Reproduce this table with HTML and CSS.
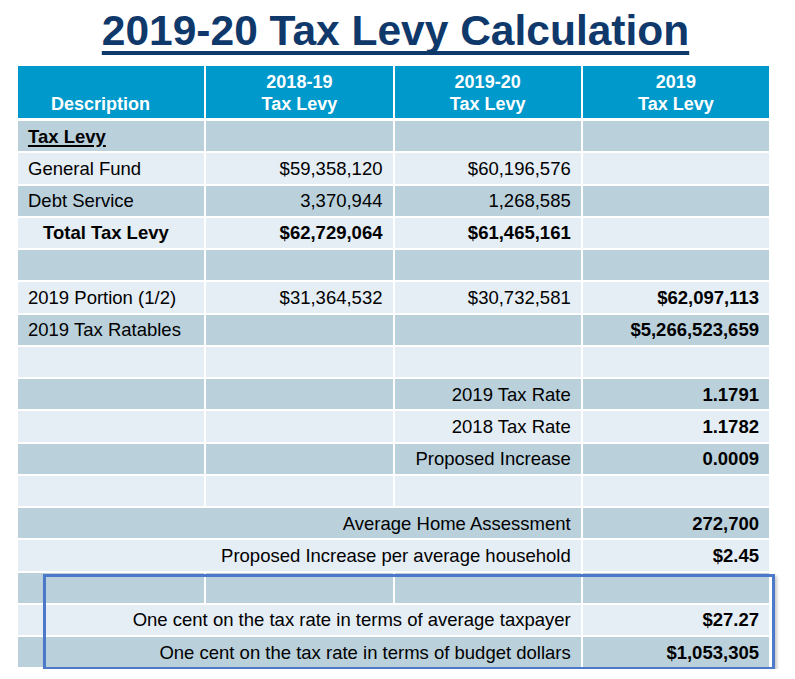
FILE: index.html
```html
<!DOCTYPE html>
<html lang="en">
<head>
<meta charset="utf-8">
<title>2019-20 Tax Levy Calculation</title>
<link rel="stylesheet" href="styles.css">
</head>
<body>
<div class="page">
  <h1 class="title"><span class="title-text">2019-20 Tax Levy Calculation</span></h1>
  <div class="table-wrap">
    <table class="levy">
      <colgroup>
        <col class="col"><col class="col"><col class="col"><col class="col">
      </colgroup>
      <thead>
        <tr>
          <th class="desc">Description</th>
          <th>2018-19<br>Tax Levy</th>
          <th>2019-20<br>Tax Levy</th>
          <th>2019<br>Tax Levy</th>
        </tr>
      </thead>
      <tbody>
        <tr><td><span class="section">Tax Levy</span></td><td></td><td></td><td></td></tr>
        <tr><td>General Fund</td><td class="num">$59,358,120</td><td class="num">$60,196,576</td><td></td></tr>
        <tr><td>Debt Service</td><td class="num">3,370,944</td><td class="num">1,268,585</td><td></td></tr>
        <tr><td class="total">Total Tax Levy</td><td class="num bold">$62,729,064</td><td class="num bold">$61,465,161</td><td></td></tr>
        <tr><td></td><td></td><td></td><td></td></tr>
        <tr><td>2019 Portion (1/2)</td><td class="num">$31,364,532</td><td class="num">$30,732,581</td><td class="num bold">$62,097,113</td></tr>
        <tr><td>2019 Tax Ratables</td><td></td><td></td><td class="num bold">$5,266,523,659</td></tr>
        <tr><td></td><td></td><td></td><td></td></tr>
        <tr><td></td><td></td><td class="num">2019 Tax Rate</td><td class="num bold">1.1791</td></tr>
        <tr><td></td><td></td><td class="num">2018 Tax Rate</td><td class="num bold">1.1782</td></tr>
        <tr><td></td><td></td><td class="num">Proposed Increase</td><td class="num bold">0.0009</td></tr>
        <tr><td></td><td></td><td></td><td></td></tr>
        <tr><td colspan="3" class="num">Average Home Assessment</td><td class="num bold">272,700</td></tr>
        <tr><td colspan="3" class="num">Proposed Increase per average household</td><td class="num bold">$2.45</td></tr>
        <tr><td></td><td></td><td></td><td></td></tr>
        <tr><td colspan="3" class="num">One cent on the tax rate in terms of average taxpayer</td><td class="num bold">$27.27</td></tr>
        <tr><td colspan="3" class="num">One cent on the tax rate in terms of budget dollars</td><td class="num bold">$1,053,305</td></tr>
      </tbody>
    </table>
    <div class="highlight"></div>
  </div>
</div>
</body>
</html>
```

FILE: styles.css
```css
html, body {
  margin: 0;
  padding: 0;
  background: #ffffff;
}

.page {
  width: 795px;
  font-family: "Liberation Sans", Arial, sans-serif;
  color: #000;
}

.title {
  margin: 7px 0 9px 0;
  padding-right: 4px;
  text-align: center;
  font-size: 42.5px;
  line-height: 48px;
  font-weight: bold;
  color: #0f386b;
}

.title-text {
  text-decoration: underline;
  text-decoration-thickness: 4px;
  text-underline-offset: 6px;
  text-decoration-skip-ink: none;
}

.table-wrap {
  position: relative;
  margin-left: 16px;
  width: 755px;
}

.levy {
  width: 755px;
  table-layout: fixed;
  border-collapse: separate;
  border-spacing: 2px;
}

.levy th {
  height: 49px;
  padding: 0 0 3px 0;
  background: #0099cc;
  color: #fff;
  font-size: 18px;
  line-height: 22px;
  font-weight: bold;
  text-align: center;
  vertical-align: bottom;
  border-bottom: 1px solid #fff;
}

.levy th.desc {
  text-align: left;
  padding-left: 33px;
}

.levy td {
  height: 30.25px;
  padding: 0 10px;
  font-size: 18.5px;
  line-height: 21px;
  vertical-align: middle;
  white-space: nowrap;
}

.levy tbody tr:nth-child(odd) td {
  background: #bad1dc;
}

.levy tbody tr:nth-child(even) td {
  background: #e5edf5;
}

.levy td.num {
  text-align: right;
}

.levy td.bold,
.levy td.total {
  font-weight: bold;
}

.levy td.total {
  padding-left: 25px;
}

.section {
  font-weight: bold;
  text-decoration: underline;
  text-decoration-thickness: 2px;
  text-underline-offset: 2px;
}

.highlight {
  position: absolute;
  left: 27px;
  top: 510px;
  width: 726px;
  height: 90px;
  border: 3px solid #4c79c9;
  box-shadow: 2px 2px 3px rgba(0, 0, 0, 0.22);
  pointer-events: none;
}
```
